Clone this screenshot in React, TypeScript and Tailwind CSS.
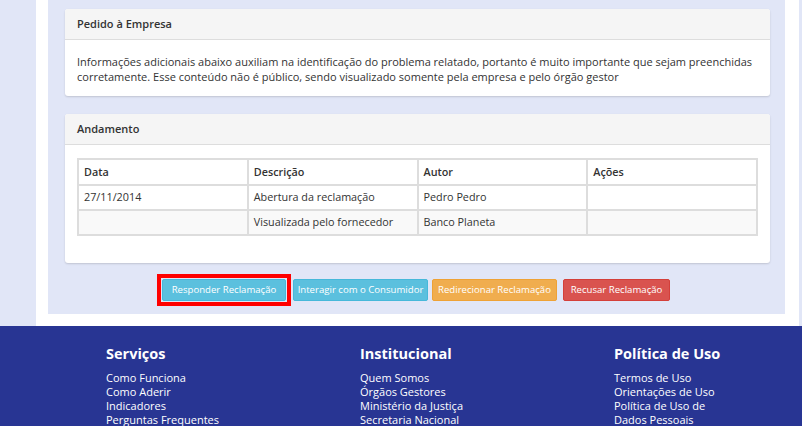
const rows = [
  { data: "27/11/2014", desc: "Abertura da reclamação", autor: "Pedro Pedro", acoes: "" },
  { data: "", desc: "Visualizada pelo fornecedor", autor: "Banco Planeta", acoes: "" },
];

const footerCols = [
  { title: "Serviços", links: ["Como Funciona", "Como Aderir", "Indicadores", "Perguntas Frequentes"] },
  { title: "Institucional", links: ["Quem Somos", "Órgãos Gestores", "Ministério da Justiça", "Secretaria Nacional"] },
  { title: "Política de Uso", links: ["Termos de Uso", "Orientações de Uso", "Política de Uso de", "Dados Pessoais"] },
];

const Card = ({ title, children, bodyClass }: { title: string; children: React.ReactNode; bodyClass: string }) => (
  <div className="bg-white rounded-[3px] shadow-[0_1px_2px_rgba(0,0,0,0.15)]">
    <div className="h-[31px] flex items-center px-3 bg-[#f5f5f5] border-b border-[#dddddd] rounded-t-[3px] text-[11px] font-semibold text-[#333]">
      {title}
    </div>
    <div className={bodyClass}>{children}</div>
  </div>
);

export default function App() {
  return (
    <div className="w-[802px] h-[426px] overflow-hidden bg-[#e1e6f7] font-['Open_Sans',sans-serif] text-[#333]">
      <div className="ml-[36px] w-[763px] bg-white pl-3 pr-[14px] pb-3">
        <div className="bg-[#e1e6f7] pl-[17px] pr-[15px] pt-[9px] h-[314px] flex flex-col">
          <Card title="Pedido à Empresa" bodyClass="px-3 pt-[14px] pb-[12px] text-[11px] leading-[15px]">
            Informações adicionais abaixo auxiliam na identificação do problema relatado, portanto é muito importante que sejam preenchidas corretamente. Esse conteúdo não é público, sendo visualizado somente pela empresa e pelo órgão gestor
          </Card>
          <div className="h-[18px]" />
          <Card title="Andamento" bodyClass="px-3 pt-[13px] pb-[27px]">
            <table className="w-[681px] border-collapse border-2 border-[#dddddd] text-[10.8px] table-fixed">
              <thead>
                <tr className="h-[26px]">
                  {["Data", "Descrição", "Autor", "Ações"].map((h) => (
                    <th key={h} className="border-2 border-[#dddddd] px-[5px] text-left font-semibold">
                      {h}
                    </th>
                  ))}
                </tr>
              </thead>
              <tbody>
                {rows.map((r, i) => (
                  <tr key={i} className={"h-[25px] " + (i % 2 === 1 ? "bg-[#f9f9f9]" : "")}>
                    <td className="border-2 border-[#dddddd] px-[5px]">{r.data}</td>
                    <td className="border-2 border-[#dddddd] px-[5px]">{r.desc}</td>
                    <td className="border-2 border-[#dddddd] px-[5px]">{r.autor}</td>
                    <td className="border-2 border-[#dddddd] px-[5px]">{r.acoes}</td>
                  </tr>
                ))}
              </tbody>
            </table>
          </Card>
          <div className="flex items-center pl-[92px] mt-[11px] text-[9.6px] text-white">
            <div className="border-[4px] border-[#ff0000] p-[1px]">
              <div className="h-[22px] w-[124px] flex items-center justify-center bg-[#5bc0de] border border-[#46b8da] rounded-[2px]">
                Responder Reclamação
              </div>
            </div>
            <div className="ml-[2px] h-[22px] w-[135px] flex items-center justify-center bg-[#5bc0de] border border-[#46b8da] rounded-[2px]">
              Interagir com o Consumidor
            </div>
            <div className="ml-[4px] h-[22px] w-[125px] flex items-center justify-center bg-[#f0ad4e] border border-[#eea236] rounded-[2px]">
              Redirecionar Reclamação
            </div>
            <div className="ml-[6px] h-[22px] w-[107px] flex items-center justify-center bg-[#d9534f] border border-[#d43f3a] rounded-[2px]">
              Recusar Reclamação
            </div>
          </div>
        </div>
      </div>
      <div className="bg-[#283593] h-[100px] flex pl-[106px] pt-[19px] text-white">
        {footerCols.map((c) => (
          <div key={c.title} className="w-[254px] shrink-0">
            <div className="text-[14.5px] font-bold leading-[18px] mb-[8px]">{c.title}</div>
            {c.links.map((l) => (
              <div key={l} className="text-[11px] leading-[14px]">
                {l}
              </div>
            ))}
          </div>
        ))}
      </div>
    </div>
  );
}
